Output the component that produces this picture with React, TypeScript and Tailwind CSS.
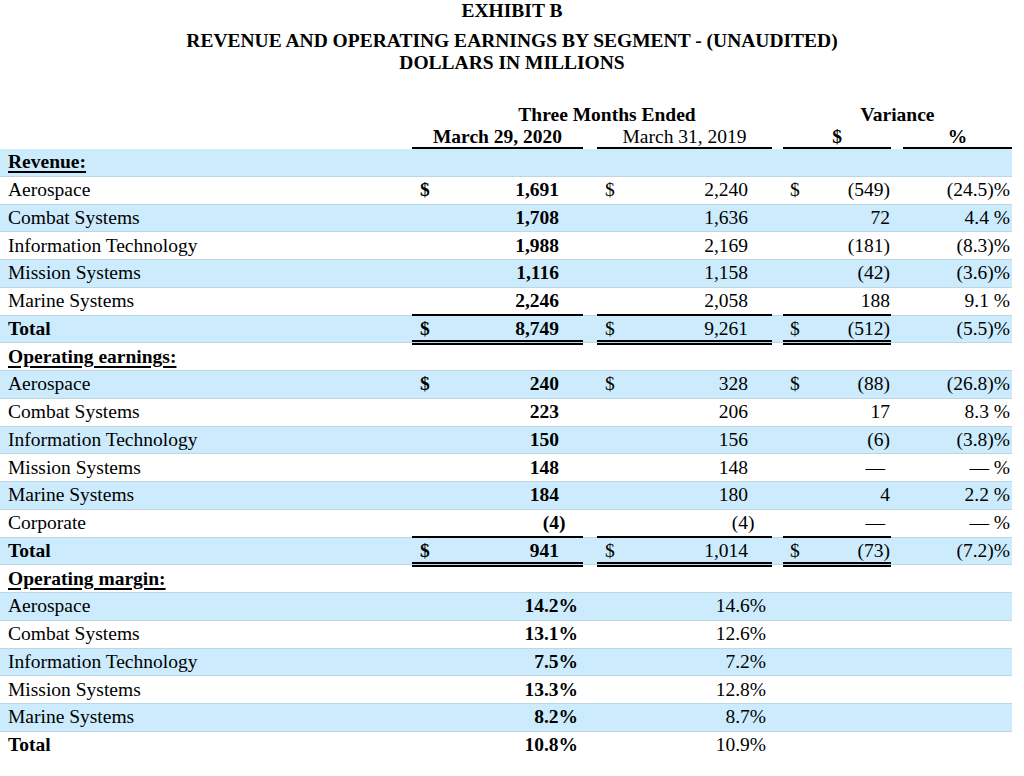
import React from "react";

type Row = {
  label: string;
  kind: "section" | "item" | "total" | "margin" | "marginTotal";
  blue: boolean;
  c1?: [string, string];
  c2?: [string, string];
  c3?: string;
  c4?: string;
  dollar?: boolean;
  rule?: "single" | "double";
  last?: boolean;
};

const G = "grid grid-cols-[412px_171px_14px_175px_11px_108px_12px_109px]";

const rows: Row[] = [
  { label: "Revenue:", kind: "section", blue: true },
  { label: "Aerospace", kind: "item", blue: false, dollar: true, c1: ["1,691", ""], c2: ["2,240", ""], c3: "(549)", c4: "(24.5)%" },
  { label: "Combat Systems", kind: "item", blue: true, c1: ["1,708", ""], c2: ["1,636", ""], c3: "72", c4: "4.4\u00a0%" },
  { label: "Information Technology", kind: "item", blue: false, c1: ["1,988", ""], c2: ["2,169", ""], c3: "(181)", c4: "(8.3)%" },
  { label: "Mission Systems", kind: "item", blue: true, c1: ["1,116", ""], c2: ["1,158", ""], c3: "(42)", c4: "(3.6)%" },
  { label: "Marine Systems", kind: "item", blue: false, c1: ["2,246", ""], c2: ["2,058", ""], c3: "188", c4: "9.1\u00a0%", rule: "single" },
  { label: "Total", kind: "total", blue: true, dollar: true, c1: ["8,749", ""], c2: ["9,261", ""], c3: "(512)", c4: "(5.5)%", rule: "double" },
  { label: "Operating earnings:", kind: "section", blue: false },
  { label: "Aerospace", kind: "item", blue: true, dollar: true, c1: ["240", ""], c2: ["328", ""], c3: "(88)", c4: "(26.8)%" },
  { label: "Combat Systems", kind: "item", blue: false, c1: ["223", ""], c2: ["206", ""], c3: "17", c4: "8.3\u00a0%" },
  { label: "Information Technology", kind: "item", blue: true, c1: ["150", ""], c2: ["156", ""], c3: "(6)", c4: "(3.8)%" },
  { label: "Mission Systems", kind: "item", blue: false, c1: ["148", ""], c2: ["148", ""], c3: "\u2014", c4: "\u2014\u00a0%" },
  { label: "Marine Systems", kind: "item", blue: true, c1: ["184", ""], c2: ["180", ""], c3: "4", c4: "2.2\u00a0%" },
  { label: "Corporate", kind: "item", blue: false, c1: ["(4", ")"], c2: ["(4", ")"], c3: "\u2014", c4: "\u2014\u00a0%", rule: "single" },
  { label: "Total", kind: "total", blue: true, dollar: true, c1: ["941", ""], c2: ["1,014", ""], c3: "(73)", c4: "(7.2)%", rule: "double" },
  { label: "Operating margin:", kind: "section", blue: false },
  { label: "Aerospace", kind: "margin", blue: true, c1: ["14.2%", ""], c2: ["14.6%", ""] },
  { label: "Combat Systems", kind: "margin", blue: false, c1: ["13.1%", ""], c2: ["12.6%", ""] },
  { label: "Information Technology", kind: "margin", blue: true, c1: ["7.5%", ""], c2: ["7.2%", ""] },
  { label: "Mission Systems", kind: "margin", blue: false, c1: ["13.3%", ""], c2: ["12.8%", ""] },
  { label: "Marine Systems", kind: "margin", blue: true, c1: ["8.2%", ""], c2: ["8.7%", ""] },
  { label: "Total", kind: "marginTotal", blue: false, c1: ["10.8%", ""], c2: ["10.9%", ""], last: true },
];

function Rule({ type }: { type?: "single" | "double" }) {
  if (type === "single") {
    return <span className="absolute left-0 right-0 bottom-[-1px] h-[2px] bg-black" />;
  }
  if (type === "double") {
    return <span className="absolute left-0 right-0 bottom-[-3px] h-[5px] border-y-2 border-black" />;
  }
  return null;
}

function BodyRow({ r }: { r: Row }) {
  const bg = r.blue ? "bg-[#ccecfd]" : "bg-white";
  const isMargin = r.kind === "margin" || r.kind === "marginTotal";
  const labelCls =
    r.kind === "section"
      ? "font-bold underline decoration-[1.5px] underline-offset-[3px]"
      : r.kind === "total" || r.kind === "marginTotal"
      ? "font-bold"
      : "";
  const border = r.last ? "border-b border-transparent" : "border-b border-[#bdd6e3]";
  return (
    <div className={`${G} h-[27.75px] ${border} ${bg}`}>
      <div className={`pl-[8px] flex items-center leading-[26px] whitespace-nowrap ${labelCls}`}>{r.label}</div>
      {/* col 1 */}
      <div className="relative flex items-center leading-[26px] font-bold whitespace-nowrap">
        {r.kind !== "section" && (
          <>
            <span className="pl-[8px] w-[22px]">{r.dollar ? "$" : ""}</span>
            {isMargin ? (
              <span className="flex-1 text-right pr-[5px]">{r.c1?.[0]}</span>
            ) : (
              <>
                <span className="flex-1 text-right">{r.c1?.[0]}</span>
                <span className="w-[24px]">{r.c1?.[1]}</span>
              </>
            )}
          </>
        )}
        <Rule type={r.rule} />
      </div>
      <div />
      {/* col 2 */}
      <div className="relative flex items-center leading-[26px] whitespace-nowrap">
        {r.kind !== "section" && (
          <>
            <span className="pl-[8px] w-[22px]">{r.dollar ? "$" : ""}</span>
            {isMargin ? (
              <span className="flex-1 text-right pr-[6px]">{r.c2?.[0]}</span>
            ) : (
              <>
                <span className="flex-1 text-right">{r.c2?.[0]}</span>
                <span className="w-[24px]">{r.c2?.[1]}</span>
              </>
            )}
          </>
        )}
        <Rule type={r.rule} />
      </div>
      <div />
      {/* col 3 */}
      <div className="relative flex items-center leading-[26px] whitespace-nowrap">
        {r.c3 !== undefined && (
          <>
            <span className="pl-[7px] w-[22px]">{r.dollar ? "$" : ""}</span>
            <span className={`flex-1 text-right ${r.c3 === "\u2014" ? "pr-[6px]" : "pr-[1px]"}`}>{r.c3}</span>
          </>
        )}
        <Rule type={r.rule} />
      </div>
      <div />
      {/* col 4 */}
      <div className="flex items-center justify-end pr-[2px] leading-[26px] whitespace-nowrap">{r.c4}</div>
    </div>
  );
}

export default function App() {
  return (
    <div className="w-[1024px] h-[776px] overflow-hidden bg-white text-black font-['Liberation_Serif',serif] text-[19.5px]">
      <div className="text-center font-bold">
        <div className="leading-[22px]">EXHIBIT B</div>
        <div className="mt-[8px] leading-[22px]">REVENUE AND OPERATING EARNINGS BY SEGMENT - (UNAUDITED)</div>
        <div className="leading-[22px]">DOLLARS IN MILLIONS</div>
      </div>
      <div className="mt-[30px]">
        <div className={`${G} h-[23px] leading-[22px] font-bold`}>
          <div />
          <div className="col-span-3 text-center pl-[30px]">Three Months Ended</div>
          <div />
          <div className="col-span-3 text-center">Variance</div>
        </div>
        <div className={`${G} h-[22px] leading-[20px]`}>
          <div />
          <div className="text-center font-bold border-b-2 border-black">March 29, 2020</div>
          <div />
          <div className="text-center border-b-2 border-black">March 31, 2019</div>
          <div />
          <div className="text-center font-bold border-b-2 border-black">$</div>
          <div />
          <div className="text-center font-bold border-b-2 border-black">%</div>
        </div>
        <div className="w-[1012px]">
          {rows.map((r, i) => (
            <BodyRow key={i} r={r} />
          ))}
        </div>
      </div>
    </div>
  );
}
